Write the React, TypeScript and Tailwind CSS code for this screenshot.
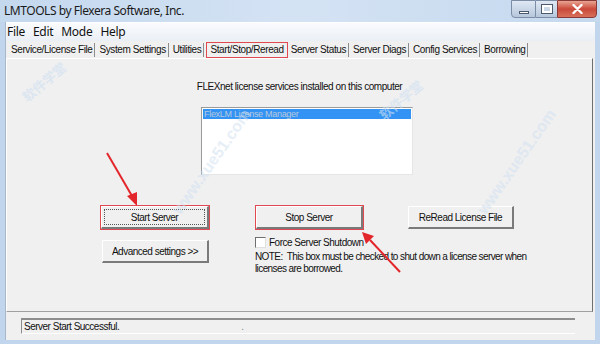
import React from 'react';

const tabs = [
  'Service/License File',
  'System Settings',
  'Utilities',
  'Start/Stop/Reread',
  'Server Status',
  'Server Diags',
  'Config Services',
  'Borrowing',
];

const ui = { fontFamily: '"Liberation Sans", Arial, sans-serif' };
const seg = { fontFamily: '"Noto Sans", "Open Sans", sans-serif' };

function Button({ label, w, outlined, focused }: { label: string; w: number; outlined?: boolean; focused?: boolean }) {
  return (
    <div
      className={`h-[23px] flex items-stretch ${outlined ? 'outline outline-[1.5px] outline-[#e0494f]' : ''}`}
      style={{ width: w }}
    >
      <div className="flex-1 bg-[#f0f0f0] border-t border-l border-t-white border-l-white border-r-2 border-b-2 border-r-[#7a7a7a] border-b-[#7a7a7a] flex items-center justify-center p-[2px]">
        <div
          className={`w-full h-full flex items-center justify-center text-[10px] tracking-[-0.5px] text-[#111] ${focused ? 'border border-dotted border-[#555]' : ''}`}
        >
          {label}
        </div>
      </div>
    </div>
  );
}

export default function App() {
  return (
    <div className="w-[600px] h-[344px] relative overflow-hidden bg-[#c1d5ec] flex flex-col" style={ui}>
      {/* title bar */}
      <div className="h-[22px] flex items-start bg-gradient-to-r from-[#c4d8ee] via-[#d4e3f4] to-[#c4d8ee]">
        <div className="self-center pl-[4px] text-[12px] tracking-[-0.45px] text-[#1b1b1b]" style={seg}>
          LMTOOLS by Flexera Software, Inc.
        </div>
        <div className="ml-auto mr-[3px] flex h-[18px]">
          <div className="w-[25px] rounded-bl-[4px] border border-[#7b8da4] bg-gradient-to-b from-[#dfe8f3] to-[#b6c7dc] flex items-center justify-center">
            <div className="w-[10px] h-[3px] bg-white border border-[#4c5a6c] mt-[6px]" />
          </div>
          <div className="w-[21px] border-y border-[#7b8da4] bg-gradient-to-b from-[#dfe8f3] to-[#b6c7dc] flex items-center justify-center">
            <div className="w-[10px] h-[8px] border-2 border-white outline outline-1 outline-[#4c5a6c]" />
          </div>
          <div className="w-[40px] rounded-br-[4px] border border-[#8a3a36] bg-gradient-to-b from-[#e8a493] via-[#c9483a] to-[#d6705a] flex items-center justify-center">
            <svg width="11" height="10" viewBox="0 0 11 10">
              <path d="M1.5 1 L9.5 9 M9.5 1 L1.5 9" stroke="#fff" strokeWidth="2.4" strokeLinecap="round" />
            </svg>
          </div>
        </div>
      </div>

      {/* client area */}
      <div className="flex-1 ml-[5px] mr-[5px] mb-[4px] bg-[#f0f0f0] flex flex-col border-l border-[#a8b8cc]">
        {/* menu */}
        <div className="h-[19px] flex items-center gap-[8px] pl-[1px] bg-gradient-to-b from-[#fafbfd] to-[#eaeff6] border-t border-white text-[12px] tracking-[-0.3px] text-[#111]" style={seg}>
          <span>File</span>
          <span>Edit</span>
          <span>Mode</span>
          <span>Help</span>
        </div>

        {/* tabs */}
        <div className="h-[17px] flex items-center pl-[3px] text-[10px] tracking-[-0.4px] text-[#111]">
          {tabs.map((t) => (
            <div key={t} className="flex items-center h-full">
              {t === 'Start/Stop/Reread' ? (
                <span className="h-[16px] px-[3px] mr-[1px] flex items-center border border-[#e0494f]">{t}</span>
              ) : (
                <>
                  <span className="pl-[2px]">{t}</span>
                  <span className="w-px h-[14px] bg-[#8c8c8c] mx-[2px]" />
                </>
              )}
            </div>
          ))}
        </div>

        {/* panel */}
        <div className="h-[254px] mr-[2px] border-t border-l border-t-white border-l-white border-r border-r-[#6f6f6f] border-b border-b-[#a0a0a0] flex flex-col">
          <div className="mt-[22px] text-center text-[10px] tracking-[-0.45px] leading-[12px] text-[#111]">
            FLEXnet license services installed on this computer
          </div>
          <div className="mt-[14px] ml-[194px] w-[212px] h-[68px] bg-white border-t border-l border-t-[#9a9a9a] border-l-[#9a9a9a] border-r border-b border-r-[#e6e6e6] border-b-[#e6e6e6] p-[1px]">
            <div className="h-[10px] bg-[#3393f5] text-[9px] leading-[10px] text-[#b8c8dc] pl-[1px] tracking-[-0.3px]">
              FlexLM License Manager
            </div>
          </div>

          <div className="mt-[31px] ml-[94px] flex">
            <Button label="Start Server" w={108} outlined focused />
            <div className="ml-[47px]">
              <Button label="Stop Server" w={107} outlined />
            </div>
            <div className="ml-[45px]">
              <Button label="ReRead License File" w={106} />
            </div>
          </div>

          <div className="ml-[95px] flex">
            <div className="mt-[11px]">
              <Button label="Advanced settings >>" w={107} />
            </div>
            <div className="ml-[46px] mt-[7px] flex flex-col">
              <div className="flex items-center h-[12px]">
                <div className="w-[11px] h-[11px] bg-white border-t border-l border-t-[#6f6f6f] border-l-[#6f6f6f] border-r border-b border-r-[#e0e0e0] border-b-[#e0e0e0]" />
                <span className="ml-[3px] text-[10px] tracking-[-0.5px] text-[#111]">Force Server Shutdown</span>
              </div>
              <div className="mt-[3px] text-[10px] leading-[12px] tracking-[-0.6px] text-[#111] whitespace-pre">
                {'NOTE:  This box must be checked to shut down a license server when\nlicenses are borrowed.'}
              </div>
            </div>
          </div>
        </div>

        {/* status */}
        <div className="flex-1 flex flex-col">
          <div className="mt-[6px] ml-[15px] mr-[20px] h-[16px] border-t-2 border-l border-t-[#8d8d8d] border-l-[#8d8d8d] border-b border-b-white flex items-center text-[10px] tracking-[-0.5px] text-[#111] pl-[2px]">
            <span>Server Start Successful.</span>
            <span className="ml-[122px] text-[#888]">.</span>
          </div>
        </div>
      </div>

      {/* watermarks */}
      <span className="absolute left-[18px] top-[72px] -rotate-[40deg] text-[13px] font-bold text-[#cfe0f0] opacity-60 pointer-events-none" style={{ fontFamily: '"Noto Sans CJK SC", sans-serif' }}>软件学堂</span>
      <span className="absolute left-[375px] top-[90px] -rotate-[40deg] text-[13px] font-bold text-[#cfe0f0] opacity-60 pointer-events-none" style={{ fontFamily: '"Noto Sans CJK SC", sans-serif' }}>软件学堂</span>
      <span className="absolute left-[150px] top-[150px] -rotate-[55deg] text-[16px] font-bold text-[#cfe0f0] opacity-50 pointer-events-none">www.xue51.com</span>
      <span className="absolute left-[455px] top-[150px] -rotate-[55deg] text-[16px] font-bold text-[#cfe0f0] opacity-50 pointer-events-none">www.xue51.com</span>

      {/* arrows */}
      <svg className="absolute inset-0 pointer-events-none" width="600" height="344">
        <line x1="107" y1="153" x2="132" y2="196" stroke="#e3262b" strokeWidth="2" />
        <polygon points="137,206 127,196 137,192" fill="#e3262b" />
        <line x1="400" y1="272" x2="370" y2="240" stroke="#e3262b" strokeWidth="2" />
        <polygon points="362,232 374,236 366,244" fill="#e3262b" />
      </svg>
    </div>
  );
}
